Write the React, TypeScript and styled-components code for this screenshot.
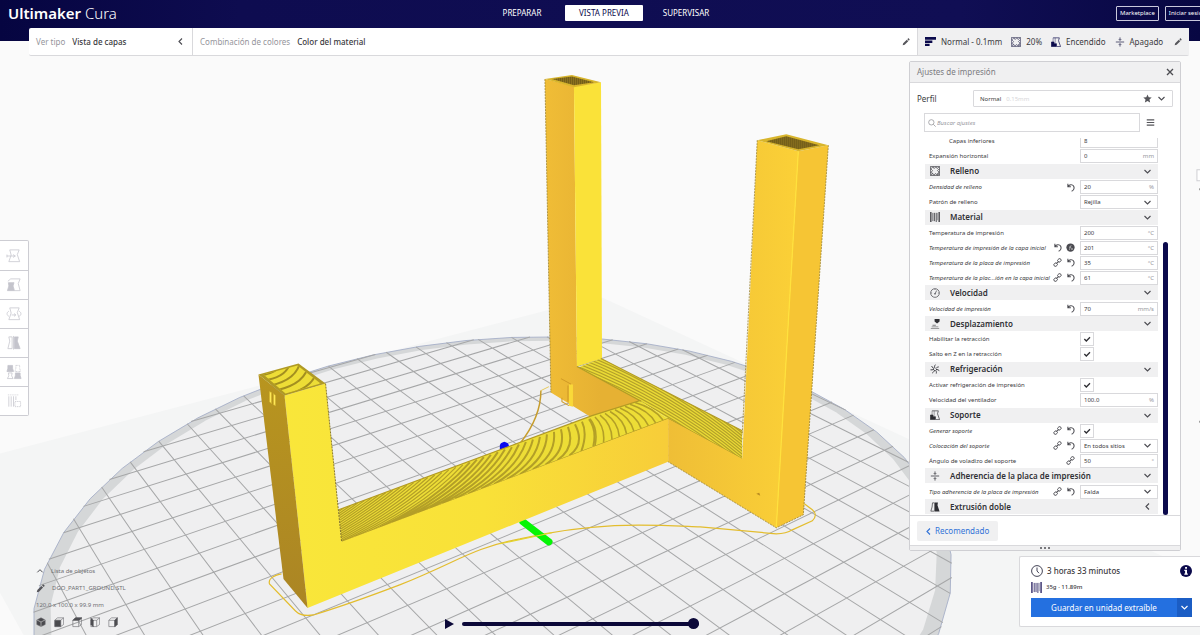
import React, { useState } from "react";
import styled, { createGlobalStyle } from "styled-components";

const navy = "#0b0a4c";
const line = "#d9d9dc";
const ink = "#3a3a40";

const GlobalStyle = createGlobalStyle`
  *, *::before, *::after { box-sizing: border-box; }
  body { margin: 0; font-family: "Noto Sans", "Open Sans", sans-serif; color: ${ink}; background: #fafafa; }
  button, input, select { font: inherit; color: inherit; margin: 0; padding: 0; border: 0; border-radius: 0; background: none; outline: 0; }
  button { cursor: pointer; }
  svg { display: block; flex: none; }
`;

/* ---------- layout ---------- */

const Page = styled.div`
  position: relative;
  display: flex;
  flex-direction: column;
  min-height: 100vh;
  overflow: hidden;
  font-size: 8px;
  line-height: 12px;
`;

const SceneLayer = styled.svg`
  position: absolute;
  inset: 0;
  width: 100%;
  height: 100%;
`;

const Header = styled.header`
  position: relative;
  display: grid;
  grid-template-columns: 1fr auto 1fr;
  align-items: start;
  height: 41px;
  padding-left: 8px;
  background: linear-gradient(90deg, #060541 0, #0e0c50 20%, #100e54 80%, #080743 100%);
  color: #fff;
`;

const Brand = styled.h1`
  margin: 0;
  font-size: 15px;
  line-height: 26px;
  font-weight: 600;
  span { font-weight: 300; }
`;

const Stages = styled.nav`
  display: flex;
  gap: 4px;
  padding-top: 5px;
`;

const StageTab = styled.button<{ $active?: boolean }>`
  width: 78px;
  height: 16px;
  font-size: 8px;
  border-radius: 1px;
  background: ${(p) => (p.$active ? "#fff" : "transparent")};
  color: ${(p) => (p.$active ? navy : "#fff")};
`;

const Account = styled.div`
  display: flex;
  justify-content: flex-end;
  gap: 6px;
  padding-top: 6px;
  margin-right: -10px;
`;

const OutlineButton = styled.button`
  height: 15px;
  padding: 0 3px;
  border: 1px solid #c9c8dc;
  border-radius: 1px;
  font-size: 6px;
  line-height: 13px;
`;

const StageBar = styled.div`
  position: relative;
  display: flex;
  height: 28px;
  margin: -13px 11px 0 29px;
  background: #fff;
  border-bottom: 1px solid ${line};
  border-radius: 2px;
`;

const BarCell = styled.button<{ $grow?: boolean; $width?: number; $shade?: boolean }>`
  display: flex;
  align-items: center;
  gap: ${(p) => (p.$shade ? 9 : 7)}px;
  flex: ${(p) => (p.$grow ? "1" : `0 0 ${p.$width}px`)};
  padding: 0 7px;
  text-align: left;
  background: ${(p) => (p.$shade ? "#f0f0f1" : "transparent")};
  & + & { border-left: 1px solid ${line}; }
  & > svg:last-child { margin-left: auto; }
`;

const Muted = styled.span`
  color: #95959b;
`;

const Strong = styled.span`
  font-weight: 500;
`;

const Summary = styled.span`
  display: flex;
  align-items: center;
  gap: 5px;
`;

const Body = styled.main`
  position: relative;
  display: flex;
  flex: 1;
`;

const LeftColumn = styled.div`
  display: flex;
  flex-direction: column;
  justify-content: space-between;
  width: 235px;
  padding: 184px 0 8px;
`;

const Toolbar = styled.div`
  display: flex;
  flex-direction: column;
  width: 29px;
  border: 1px solid #cdcdd3;
  border-left: 0;
  border-radius: 0 2px 2px 0;
  background: #fff;
`;

const ToolButton = styled.button`
  display: grid;
  place-items: center;
  height: 29px;
  & + & { border-top: 1px solid #cdcdd3; }
`;

const ObjectInfo = styled.section`
  display: flex;
  flex-direction: column;
  gap: 5px;
  padding-left: 36px;
  color: #707074;
  font-size: 6px;
`;

const InfoLine = styled.div`
  display: flex;
  align-items: center;
  gap: 7px;
`;

const PlainButton = styled.button`
  display: flex;
  align-items: center;
  gap: 7px;
`;

const Views = styled.div`
  display: flex;
  gap: 8px;
`;

const Player = styled.div`
  display: flex;
  flex: 1;
  align-self: flex-end;
  align-items: center;
  justify-content: center;
  gap: 8px;
  padding-bottom: 6px;
`;

const Range = styled.input`
  appearance: none;
  width: 237px;
  height: 12px;
  &::-webkit-slider-runnable-track { height: 4px; border-radius: 2px; background: #0b0838; }
  &::-webkit-slider-thumb {
    appearance: none;
    width: 11px;
    height: 11px;
    margin-top: -4px;
    border-radius: 50%;
    background: #0b0838;
  }
`;

const RightColumn = styled.div`
  display: flex;
  flex-direction: column;
  align-items: flex-end;
  justify-content: space-between;
  gap: 5px;
  width: 291px;
  padding: 5px 0 9px;
`;

/* ---------- print settings ---------- */

const Panel = styled.section`
  display: flex;
  flex-direction: column;
  width: 272px;
  margin-right: 19px;
  border: 1px solid #cfcfd3;
  border-radius: 2px;
  background: #fff;
`;

const PanelHead = styled.header`
  display: flex;
  align-items: center;
  justify-content: space-between;
  height: 21px;
  padding: 0 6px 0 7px;
  border-bottom: 1px solid ${line};
  background: #f0f0f1;
  color: #7b7b80;
`;

const PanelTitle = styled.h2`
  margin: 0;
  font-size: 8px;
  font-weight: 400;
`;

const IconButton = styled.button`
  display: grid;
  place-items: center;
`;

const ProfileRow = styled.div`
  display: flex;
  align-items: center;
  justify-content: space-between;
  padding: 7px 7px 6px;
`;

const ProfileBox = styled.button`
  display: flex;
  align-items: center;
  gap: 5px;
  width: 200px;
  height: 17px;
  padding: 0 6px;
  border: 1px solid ${line};
  border-radius: 1px;
  font-size: 6px;
  em { font-style: normal; color: #d6d6d9; flex: 1; text-align: left; }
`;

const SearchRow = styled.div`
  display: flex;
  align-items: center;
  gap: 6px;
  padding: 0 14px 6px;
`;

const SearchBox = styled.label`
  display: flex;
  align-items: center;
  gap: 1px;
  width: 216px;
  height: 19px;
  padding: 0 3px;
  border: 1px solid ${line};
  input { flex: 1; min-width: 0; font-size: 6px; font-style: italic; }
  input::placeholder { color: #9a9a9f; opacity: 1; }
`;

const Scroller = styled.div`
  display: flex;
  align-items: flex-end;
  gap: 5px;
  height: 377px;
  padding-left: 15px;
  overflow: hidden;
`;

const ScrollThumb = styled.div`
  width: 5px;
  height: 273px;
  border-radius: 3px;
  background: ${navy};
`;

const SettingList = styled.div`
  display: flex;
  flex-direction: column;
  width: 233px;
  height: 381px;
`;

const Row = styled.div`
  display: flex;
  flex: 1;
  align-items: center;
  gap: 5px;
  padding-left: 4px;
`;

const RowLabel = styled.label<{ $changed?: boolean; $indent?: boolean }>`
  flex: 1;
  min-width: 0;
  padding-left: ${(p) => (p.$indent ? 20 : 0)}px;
  font-size: 6px;
  line-height: 8px;
  white-space: nowrap;
  font-style: ${(p) => (p.$changed ? "italic" : "normal")};
`;

const RowIcons = styled.span`
  display: flex;
  gap: 4px;
`;

const SectionHead = styled.button`
  display: flex;
  flex: 1;
  align-items: center;
  gap: 10px;
  padding: 0 6px 0 5px;
  border-bottom: 1px solid #fff;
  background: #f0f0f1;
  font-size: 8px;
  font-weight: 600;
  line-height: 12px;
  color: #303035;
  svg:last-child { margin-left: auto; }
`;

const Control = styled.span<{ $small?: boolean }>`
  display: flex;
  align-items: center;
  flex: none;
  width: ${(p) => (p.$small ? 14 : 78)}px;
  height: 14px;
  margin-right: ${(p) => (p.$small ? 64 : 0)}px;
  border: 1px solid ${line};
  background: #fff;
  font-size: 6px;
  input[type="text"] { flex: 1; min-width: 0; height: 12px; padding-left: 3px; }
`;

const Unit = styled.span`
  padding-right: 3px;
  color: #96969c;
`;

const Stack = styled.span`
  display: grid;
  flex: 1;
  align-items: center;
  & > * { grid-area: 1 / 1; }
  svg { justify-self: end; margin-right: 5px; pointer-events: none; }
`;

const Select = styled.select`
  appearance: none;
  width: 100%;
  height: 12px;
  padding-left: 3px;
`;

const CheckStack = styled(Stack)`
  svg { justify-self: center; margin: 0; }
`;

const Tick = styled.input`
  appearance: none;
  width: 12px;
  height: 12px;
  & + svg { visibility: hidden; }
  &:checked + svg { visibility: visible; }
`;

const PanelFoot = styled.footer`
  padding: 5px 7px 4px;
  border-top: 1px solid ${line};
`;

const Recommended = styled.button`
  display: flex;
  align-items: center;
  gap: 2px;
  width: 81px;
  height: 20px;
  padding: 0 7px;
  border-radius: 2px;
  background: #f0f0f1;
  color: #3273d8;
`;

const Grip = styled.div`
  display: flex;
  align-items: center;
  justify-content: center;
  gap: 2px;
  height: 5px;
  border-top: 1px solid ${line};
  background: #f0f0f1;
  i { width: 2px; height: 2px; border-radius: 50%; background: #505055; }
`;

/* ---------- output card ---------- */

const OutputCard = styled.section`
  display: flex;
  flex-direction: column;
  width: 181px;
  height: 71px;
  padding: 7px 8px 9px 11px;
  border: 1px solid ${line};
  border-right: 0;
  border-radius: 2px 0 0 2px;
  background: #fff;
`;

const OutputLine = styled.div<{ $minor?: boolean }>`
  display: flex;
  align-items: center;
  gap: 4px;
  height: 14px;
  margin-bottom: ${(p) => (p.$minor ? 4 : 2)}px;
  font-size: ${(p) => (p.$minor ? 6 : 8)}px;
  font-weight: 500;
  button { margin-left: auto; }
`;

const SaveRow = styled.div`
  display: flex;
  height: 19px;
  background: #2470e0;
  color: #fff;
`;

const SaveButton = styled.button`
  flex: 1;
`;

const SaveMore = styled.button`
  display: grid;
  place-items: center;
  width: 15px;
  background: #1b5dc4;
`;

/* ---------- icons ---------- */

type IconProps = { size?: number; color?: string };
type Dir = "down" | "left" | "up";

const chevrons: Record<Dir, string> = {
  down: "M2 4l4 4 4-4",
  left: "M8 2L4 6l4 4",
  up: "M2 8l4-4 4 4",
};

const Chevron = ({ dir = "down", size = 9, color = "#4c4c52" }: IconProps & { dir?: Dir }) => (
  <svg width={size} height={size} viewBox="0 0 12 12" fill="none" stroke={color} strokeWidth="1.500">
    <path d={chevrons[dir]} />
  </svg>
);

const Pencil = ({ size = 8, color = "#55555a" }: IconProps) => (
  <svg width={size} height={size} viewBox="0 0 12 12" fill={color}>
    <path d="M1 11l.8-3L7.2 2.600l2.200 2.200L4 10.200zM8 1.800l1-1c.4-.4 1-.3 1.300 0l.9.900c.4.400.4.900 0 1.300l-1 1z" />
  </svg>
);

const LayersIcon = () => (
  <svg width="11" height="11" viewBox="0 0 12 12" fill={navy}>
    <path d="M0 1h12v3H0zM0 5h8v2.500H0zM0 8.500h5V11H0z" />
  </svg>
);

const InfillIcon = ({ size = 10, color = "#4a4a6a" }: IconProps) => (
  <svg width={size} height={size} viewBox="0 0 12 12" fill="none" stroke={color} strokeWidth=".9">
    <path d="M.5.500h11v11H.5z" />
    <path d="M1 3.500L3.500 1 5 3 7 1l1.500 2L11 1M1 3.500l2 2-2 2.500 2.500 1L1 11M3.500 9L5 11l1.500-2L9 11l.5-2.500L11 11M11 3.500l-2 2 2 2-1.500 1" />
  </svg>
);

const SupportIcon = ({ size = 10, color = navy }: IconProps) => (
  <svg width={size} height={size} viewBox="0 0 12 12" fill="none" stroke={color} strokeWidth=".8">
    <path d="M2.500 1H10L9 4.500l2.500 7H7" />
    <path d="M.5 6h3l.5 2h2.500v3.500h-6z" fill={color} />
    <path d="M2.500 1v5M5 1v6" strokeWidth=".5" />
  </svg>
);

const AdhesionIcon = ({ size = 10, color = "#3f3f60" }: IconProps) => (
  <svg width={size} height={size} viewBox="0 0 12 12" fill="none" stroke={color}>
    <path d="M1 6h10M6 .5V4M6 8v3.500M4.500 2.500L6 4l1.500-1.500M4.500 9.500L6 8l1.500 1.500" />
  </svg>
);

const MaterialIcon = ({ size = 10, color = "#3c3c42" }: IconProps) => (
  <svg width={size} height={size} viewBox="0 0 12 12" fill="none" stroke={color}>
    <path d="M1 0v12M11 0v12" strokeWidth="1.600" />
    <path d="M3.500 1v10M5.500 1v10M7.500 1v11" />
    <path d="M9 1v9" strokeWidth=".5" />
  </svg>
);

const SpeedIcon = () => (
  <svg width="10" height="10" viewBox="0 0 12 12" fill="none" stroke="#4c4c52" strokeWidth=".9">
    <circle cx="6" cy="6" r="5.200" />
    <path d="M6 7l2-4M6 1.200v1M1.500 6h1M9.500 6h1" />
    <circle cx="6" cy="7" r=".6" />
  </svg>
);

const TravelIcon = () => (
  <svg width="10" height="10" viewBox="0 0 12 12" fill="#2f2f34">
    <path d="M5.500 0h6v3L8.500 5.500 5.500 3z" />
    <path d="M1 11h10v1H1zM2 9h8v1H2zM3 7h4v1H3z" opacity=".6" />
  </svg>
);

const CoolingIcon = () => (
  <svg width="10" height="10" viewBox="0 0 12 12" fill="none" stroke="#3f3f45" strokeWidth="1.200">
    <path d="M6 5C5 3.500 5.500 2 6.500.8M7 5.500C8 4 9.500 3.500 10.500 3.500M7.200 6.500c1.800 0 3 .5 4 1.500M6.500 7.200c1 1.300 1.500 2.500 1 4.200M5.500 7.200C5 9 4 10 2.800 10.800M4.800 6.300C3 7 2 7.300.6 7M5 5.500C3.500 5 2.500 4 2 2.500" />
  </svg>
);

const DualIcon = () => (
  <svg width="10" height="10" viewBox="0 0 12 12" fill="#2f2f34">
    <path d="M3 1h2.500v10H1L2.500 6z" fill="none" stroke="#2f2f34" strokeWidth=".8" />
    <path d="M6 .5h3.500L9 4l2.500 7.500H6z" />
  </svg>
);

const ResetIcon = () => (
  <svg width="9" height="9" viewBox="0 0 12 12" fill="none" stroke="#4a4a50" strokeWidth="1.400">
    <path d="M2.500 1v4h4M2.500 5C4 2.500 6 1.800 8 2.500c2.500 1 3.500 3.500 2.300 6-.6 1.200-1.500 2-2.800 2.500" />
  </svg>
);

const LinkIcon = () => (
  <svg width="9" height="9" viewBox="0 0 12 12" fill="none" stroke="#4a4a50" strokeWidth="1.200">
    <rect x="6" y="1.200" width="5" height="4" rx="2" transform="rotate(-40 8.500 3.200)" />
    <rect x="1" y="6.800" width="5" height="4" rx="2" transform="rotate(-40 3.500 8.800)" />
    <path d="M4.500 7.500l3-3" />
  </svg>
);

const FormulaIcon = () => (
  <svg width="9" height="9" viewBox="0 0 12 12">
    <circle cx="6" cy="6" r="5.500" fill="#4a4a50" />
    <path d="M4 9.500c1.500 0 1-6 3-6.500M4 5.500h3M7 7l2 2M9 7L7 9" stroke="#ddd" strokeWidth=".8" fill="none" />
  </svg>
);

const CheckIcon = () => (
  <svg width="8" height="8" viewBox="0 0 12 12" fill="none" stroke="#2f2f34" strokeWidth="2">
    <path d="M2 6l3 3 5.500-5.500" />
  </svg>
);

const CloseIcon = () => (
  <svg width="8" height="8" viewBox="0 0 12 12" stroke="#4c4c52" strokeWidth="2">
    <path d="M1.500 1.500l9 9M10.500 1.500l-9 9" />
  </svg>
);

const StarIcon = () => (
  <svg width="9" height="9" viewBox="0 0 12 12" fill="#55555a">
    <path d="M6 .5l1.600 3.700 4 .3-3 2.700.9 4L6 9.200l-3.500 2 .9-4-3-2.700 4-.3z" />
  </svg>
);

const SearchIcon = () => (
  <svg width="8" height="8" viewBox="0 0 12 12" fill="none" stroke="#85858a">
    <circle cx="5" cy="5" r="4" />
    <path d="M8 8l3.500 3.500" />
  </svg>
);

const MenuIcon = () => (
  <svg width="9" height="9" viewBox="0 0 12 12" stroke="#55555a" strokeWidth="1.500">
    <path d="M1 2.500h10M1 6h10M1 9.500h10" />
  </svg>
);

const ClockIcon = () => (
  <svg width="12" height="12" viewBox="0 0 12 12" fill="none" stroke="#303045" strokeWidth=".9">
    <circle cx="6" cy="6" r="5.400" />
    <path d="M6 2.500V6l2 2.200" />
  </svg>
);

const InfoIcon = () => (
  <svg width="12" height="12" viewBox="0 0 12 12">
    <circle cx="6" cy="6" r="6" fill={navy} />
    <path d="M5.100 2h1.900v1.700H5.100zM4.300 4.700h2.700v3.800h.8v1.200H4.300V8.500h.8V5.900h-.8z" fill="#fff" />
  </svg>
);

const PlayIcon = () => (
  <svg width="9" height="10" viewBox="0 0 9 10" fill="#0b0838">
    <path d="M0 0l9 5-9 5z" />
  </svg>
);

const body = "M4 1.500h10l-2 5 2.500 7.500H3L5.500 7z";
const toolShapes: Record<string, React.ReactNode> = {
  Mover: (
    <>
      <path d={body} />
      <path d="M1 8h8M7.500 6.500L10 8l-2.500 1.500M1 6.500v3" />
    </>
  ),
  Escalar: (
    <>
      <path d="M5 1.500h10l-2 5 2 7.500H9M5 1.500L2 4" />
      <path d="M2.500 5.500h6L7.500 9 9 14H1.500L3 9z" fill="#c4c4cc" />
    </>
  ),
  Rotar: (
    <>
      <path d={body} />
      <path d="M3 5C.5 6.500.5 9 3 10.500M14 5c2.500 1.500 2.500 4 0 5.500M6 9h4M8.500 7.500L10.500 9l-2 1.500" />
    </>
  ),
  Reflejar: (
    <>
      <path d="M6.500 1.500H3l1 4.500-2 8h4.500z" />
      <path d="M8 .5v14.500" />
      <path d="M9 1.500h4L12 6l3 8H9z" fill="#c4c4cc" />
    </>
  ),
  "Ajustes por modelo": (
    <>
      <path d="M2 1h5v3l1 3.500H1L2 4z" fill="#c4c4cc" />
      <path d="M10.500 1h4v3l1 3.500H9.500l1-3.500z" strokeDasharray="1 .6" />
      <path d="M2.500 9h4l-.5 3 1.500 3H1.500L3 12z" />
      <path d="M10 9h5v2.500l1 3.500H9l1-3.500z" fill="#c4c4cc" />
    </>
  ),
  "Bloqueador de soporte": (
    <>
      <path d="M2 1.500h12" strokeDasharray="1 1" />
      <path d="M3 3v11M5.500 3v11M8 3v11M10.500 3v4" />
      <path d="M9.500 8.500h6V14h-6z" fill="#fff" strokeDasharray="1.500 .8" />
    </>
  ),
};

const cubes = [
  "M6 1l5 2.500v5.500L6 11.500 1 9V3.500z",
  "M1 4h7v7.500H1z",
  "M1 4l3-3h8L9 4z",
  "M1 1l3 3v8L1 9z",
  "M8 4l3-3v8l-3 3z",
];

/* ---------- build plate and model ---------- */

/* Ground plane: u runs towards the right vanishing point, v towards the left one. */
const center = { u: 5.82, v: 0.68 };
const project = (u: number, v: number): [number, number] => {
  const t = (u + center.u) * 0.0222;
  const s = (v + center.v) * 0.028;
  const w = 1 + t + s;
  return [(308 + 2200 * t - 340 * s) / w, (607 - 160 * (t + s)) / w];
};
const pt = (u: number, v: number) => project(u, v).map((n) => n.toFixed(1)).join(" ");

const radius = 11.12;
const disc = (r: number, n: number) =>
  Array.from({ length: n }, (_, i) => {
    const a = (i / n) * Math.PI * 2;
    return pt(r * Math.cos(a), r * Math.sin(a));
  }).join(" ");

const gridPath = Array.from({ length: 23 }, (_, i) => i - 11)
  .map((k) => {
    const h = Math.sqrt(radius * radius - k * k);
    return `M${pt(k, -h)}L${pt(k, h)}M${pt(-h, k)}L${pt(h, k)}`;
  })
  .join("");

const farY = (x: number) => 509 - 0.362 * (x - 339);
const nearY = (x: number) => 541 - 0.379 * (x - 342);

/* How far each top-skin line drifts left between the far and near edge of the beam. */
const drift: [number, number][] = [
  [340, 190],
  [450, 105],
  [510, 58],
  [560, 16],
  [600, -12],
  [640, -30],
  [720, -44],
];
const driftAt = (x: number) => {
  const i = Math.max(1, drift.findIndex(([px]) => px >= x));
  const [x0, d0] = drift[i - 1];
  const [x1, d1] = drift[i];
  return d0 + ((d1 - d0) * (x - x0)) / (x1 - x0);
};

const grain = (from: number, to: number, step: number) => {
  let out = "";
  for (let x = from; x < to; x += step) {
    const d = driftAt(x);
    const nx = x - d;
    const cx = (x + nx) / 2 + (x < 580 ? 13 : 6);
    const cy = (farY(x) + nearY(nx)) / 2 + (x < 580 ? 4 : -3);
    out += `M${x} ${farY(x).toFixed(1)}Q${cx.toFixed(1)} ${cy.toFixed(1)} ${nx.toFixed(1)} ${nearY(nx).toFixed(1)}`;
  }
  return out;
};
const fineGrain = grain(344, 470, 7);
const wideGrain = grain(470, 590, 7);
const endGrain = grain(590, 716, 5);

const crossGrain = Array.from({ length: 50 }, (_, i) => {
  const y = 255 + i * 3;
  return `M570 ${y}Q670 ${y + 38} 750 ${y + 106}`;
}).join("");

const Scene = () => (
  <SceneLayer viewBox="0 0 1200 635" preserveAspectRatio="xMidYMid slice" aria-hidden="true">
    <defs>
      <linearGradient id="leftFace" x1="0" y1="0" x2="0" y2="1">
        <stop offset="0" stopColor="#b8951f" />
        <stop offset="1" stopColor="#ab8524" />
      </linearGradient>
      <linearGradient id="frontFace" x1="260" x2="668" y1="0" y2="0" gradientUnits="userSpaceOnUse">
        <stop offset="0" stopColor="#f9e73a" />
        <stop offset=".55" stopColor="#f9e138" />
        <stop offset="1" stopColor="#f7cd39" />
      </linearGradient>
      <linearGradient id="backLeft" x1="545" x2="600" y1="0" y2="0" gradientUnits="userSpaceOnUse">
        <stop offset="0" stopColor="#f0bd36" />
        <stop offset="1" stopColor="#e6b133" />
      </linearGradient>
      <linearGradient id="rightFront" x1="668" x2="810" y1="0" y2="0" gradientUnits="userSpaceOnUse">
        <stop offset="0" stopColor="#efbe36" />
        <stop offset="1" stopColor="#fcd237" />
      </linearGradient>
      <pattern id="hatch" width="2" height="2" patternUnits="userSpaceOnUse">
        <rect width="2" height="2" fill="#8e7420" />
        <rect width="1" height="2" fill="#6e5a18" />
      </pattern>
      <clipPath id="beamTop"><path d="M339 509L592 415 640 400 668 418 342 541z" /></clipPath>
      <clipPath id="crossTop"><path d="M578 367L601 358 742 430V458L668 418 640 400z" /></clipPath>
      <clipPath id="legTop"><path d="M264 374L298 365 321 383 286 393z" /></clipPath>
    </defs>

    <rect width="1200" height="635" fill="#fafafa" />
    <path d="M0 453L600 296 1200 573V635H25L0 590z" fill="#f4f5f5" />
    <polygon points={disc(radius, 44)} fill="#d5d7d8" stroke="#9fa9c4" strokeWidth=".8" />
    <polygon points={disc(10.78, 44)} fill="#efeff0" />
    <path d={gridPath} stroke="#a6a7a8" strokeWidth="1" fill="none" />

    <path d="M541 390C541 410 532 428 520 443" stroke="#c79d2c" strokeWidth="1.500" fill="none" />
    <path d="M541 390l8-4" stroke="#e6c95a" fill="none" />
    <path d="M500 450v-5q0-3 4.500-4 4.500 1 4.500 4v5z" fill="#0a0af0" />

    <path
      d="M282 573Q268 576 270 583L296 610Q302 616 314 614 350 603 400 584C460 560 470 548 520 538 600 520 650 524 700 526L776 533Q786 533 792 529L812 520Q818 514 812 509L804 503"
      stroke="#e3bd2e"
      strokeWidth="1.200"
      fill="none"
    />
    <path d="M523 521L549 541" stroke="#05f505" strokeWidth="7" strokeLinecap="round" />
    <path d="M500 543L552 532" stroke="#e3d42e" />

    <path d="M545 79L574 86 577 366 640 400 592 417 551 392z" fill="url(#backLeft)" />
    <path d="M574 86L601 82 602 358 577 366z" fill="#fae239" />
    <path d="M545 79L572 75 601 82 574 87z" fill="#d8b52c" />
    <path d="M552 79L572 76.500 594 82 574 85z" fill="url(#hatch)" />
    <path d="M569 384h4v22l-4-1z" fill="#f9d939" />
    <path d="M561 378l10 5.500M568 385v16M562 397v4l7 4" stroke="#cf9a26" strokeWidth="1" fill="none" />

    <path d="M578 367L601 358 742 430V458L668 418 640 400z" fill="#eada35" />
    <path d={crossGrain} clipPath="url(#crossTop)" stroke="#b3a02a" strokeWidth="1.200" fill="none" />
    <path d="M339 509L592 415 640 400 668 418 342 541z" fill="#eddd36" />
    <g clipPath="url(#beamTop)" stroke="#b39f27" fill="none">
      <path d={fineGrain} strokeWidth="1.200" />
      <path d={wideGrain} strokeWidth="2" />
      <path d={endGrain} strokeWidth="1.600" />
    </g>
    <path d="M339 509L592 415 640 400 577 366M601 358L742 430M342 541L668 418 742 458" stroke="#b39b24" strokeWidth="1.200" fill="none" />

    <path d="M757 140L798 151 776 527 668 461V418L742 458z" fill="url(#rightFront)" />
    <path d="M798 151L828 145 803 514 776 527z" fill="#f6c534" />
    <path d="M798 151L776 527" stroke="#ffe23c" strokeWidth="1.200" />
    <path d="M757 140L786 134 828 145 798 151z" fill="#d8b52c" />
    <path d="M766 141L786 136 819 145 798 149z" fill="url(#hatch)" />
    <path d="M757 140L742 434M828 145L803 514L776 527L668 461M545 79L551 392" stroke="#9c8330" strokeWidth=".8" strokeDasharray="2 1" fill="none" />
    <path d="M756 493l3-1 1 3z" fill="#b98b20" />

    <path d="M285 395L326 383 342 541 668 418V461L308 607z" fill="url(#frontFace)" />
    <path d="M259 374L285 395 308 607 284 578z" fill="url(#leftFace)" />
    <path d="M259 374L299 363 326 383 285 395z" fill="#b09a24" />
    <path d="M264 374L298 365 321 383 286 393z" fill="#eddd36" />
    <path
      d="M255 376Q276 374 282 364M262 380Q286 378 291 362M264 386Q294 382 300 364M270 391Q302 386 308 368M279 396Q310 390 316 374M290 398Q318 392 324 379"
      clipPath="url(#legTop)"
      stroke="#a38f20"
      strokeWidth="2"
      fill="none"
    />
    <path d="M270 391l2 1v11l-2-2zM274 393l2 2v10l-2-1z" fill="#ffe85a" stroke="#cfae28" strokeWidth=".6" />
    <path d="M326 383L342 541" stroke="#7d6b20" strokeWidth=".9" strokeDasharray="2 1" />

    <path d="M1201 169.500h-5v11h5" fill="#fff" stroke="#cfcfd3" />
    <circle cx="1200" cy="189" r="1.500" fill="#444" />
    <circle cx="1200" cy="421" r="1.500" fill="#444" />
  </SceneLayer>
);

/* ---------- settings data ---------- */

type Mark = "link" | "reset" | "formula";
type Item =
  | { kind: "section"; title: string; icon: React.ReactNode; closed?: boolean }
  | { kind: "text"; label: string; value: string; unit?: string; marks?: Mark[]; changed?: boolean; indent?: boolean }
  | { kind: "select"; label: string; value: string; marks?: Mark[]; changed?: boolean }
  | { kind: "check"; label: string; marks?: Mark[]; changed?: boolean };

const grey = "#44444a";
const items: Item[] = [
  { kind: "text", label: "Capas inferiores", value: "8", indent: true },
  { kind: "text", label: "Expansión horizontal", value: "0", unit: "mm" },
  { kind: "section", title: "Relleno", icon: <InfillIcon color={grey} /> },
  { kind: "text", label: "Densidad de relleno", value: "20", unit: "%", marks: ["reset"], changed: true },
  { kind: "select", label: "Patrón de relleno", value: "Rejilla" },
  { kind: "section", title: "Material", icon: <MaterialIcon /> },
  { kind: "text", label: "Temperatura de impresión", value: "200", unit: "°C" },
  { kind: "text", label: "Temperatura de impresión de la capa inicial", value: "201", unit: "°C", marks: ["reset", "formula"], changed: true },
  { kind: "text", label: "Temperatura de la placa de impresión", value: "35", unit: "°C", marks: ["link", "reset"], changed: true },
  { kind: "text", label: "Temperatura de la plac...ión en la capa inicial", value: "61", unit: "°C", marks: ["link", "reset"], changed: true },
  { kind: "section", title: "Velocidad", icon: <SpeedIcon /> },
  { kind: "text", label: "Velocidad de impresión", value: "70", unit: "mm/s", marks: ["reset"], changed: true },
  { kind: "section", title: "Desplazamiento", icon: <TravelIcon /> },
  { kind: "check", label: "Habilitar la retracción" },
  { kind: "check", label: "Salto en Z en la retracción" },
  { kind: "section", title: "Refrigeración", icon: <CoolingIcon /> },
  { kind: "check", label: "Activar refrigeración de impresión" },
  { kind: "text", label: "Velocidad del ventilador", value: "100.0", unit: "%" },
  { kind: "section", title: "Soporte", icon: <SupportIcon color="#2f2f34" /> },
  { kind: "check", label: "Generar soporte", marks: ["link", "reset"], changed: true },
  { kind: "select", label: "Colocación del soporte", value: "En todos sitios", marks: ["link", "reset"], changed: true },
  { kind: "text", label: "Ángulo de voladizo del soporte", value: "50", unit: "°", marks: ["link"] },
  { kind: "section", title: "Adherencia de la placa de impresión", icon: <AdhesionIcon color={grey} /> },
  { kind: "select", label: "Tipo adherencia de la placa de impresión", value: "Falda", marks: ["link", "reset"], changed: true },
  { kind: "section", title: "Extrusión doble", icon: <DualIcon />, closed: true },
];

const markIcons: Record<Mark, React.ReactNode> = {
  link: <LinkIcon />,
  reset: <ResetIcon />,
  formula: <FormulaIcon />,
};

const SettingRow = ({ item, id }: { item: Item; id: string }) => {
  if (item.kind === "section") {
    return (
      <SectionHead type="button">
        {item.icon}
        {item.title}
        <Chevron dir={item.closed ? "left" : "down"} />
      </SectionHead>
    );
  }
  return (
    <Row>
      <RowLabel htmlFor={id} $changed={item.changed} $indent={item.kind === "text" && item.indent}>
        {item.label}
      </RowLabel>
      {item.marks && (
        <RowIcons>
          {item.marks.map((m) => (
            <IconButton key={m} type="button" aria-label={m}>
              {markIcons[m]}
            </IconButton>
          ))}
        </RowIcons>
      )}
      {item.kind === "text" && (
        <Control>
          <input id={id} type="text" defaultValue={item.value} />
          <Unit>{item.unit}</Unit>
        </Control>
      )}
      {item.kind === "select" && (
        <Control>
          <Stack>
            <Select id={id} defaultValue={item.value}>
              <option>{item.value}</option>
            </Select>
            <Chevron />
          </Stack>
        </Control>
      )}
      {item.kind === "check" && (
        <Control $small>
          <CheckStack>
            <Tick id={id} type="checkbox" defaultChecked />
            <CheckIcon />
          </CheckStack>
        </Control>
      )}
    </Row>
  );
};

export default function App() {
  const [layer, setLayer] = useState(100);
  return (
    <>
      <GlobalStyle />
      <Page>
        <Scene />
        <Header>
          <Brand>
            Ultimaker <span>Cura</span>
          </Brand>
          <Stages>
            <StageTab>PREPARAR</StageTab>
            <StageTab $active>VISTA PREVIA</StageTab>
            <StageTab>SUPERVISAR</StageTab>
          </Stages>
          <Account>
            <OutlineButton>Marketplace</OutlineButton>
            <OutlineButton>Iniciar sesión</OutlineButton>
          </Account>
        </Header>

        <StageBar>
          <BarCell $width={163}>
            <Muted>Ver tipo</Muted>
            <Strong>Vista de capas</Strong>
            <Chevron dir="left" />
          </BarCell>
          <BarCell $grow>
            <Muted>Combinación de colores</Muted>
            <Strong>Color del material</Strong>
            <Pencil />
          </BarCell>
          <BarCell $width={272} $shade>
            <Summary><LayersIcon />Normal - 0.1mm</Summary>
            <Summary><InfillIcon />20%</Summary>
            <Summary><SupportIcon />Encendido</Summary>
            <Summary><AdhesionIcon />Apagado</Summary>
            <Pencil />
          </BarCell>
        </StageBar>

        <Body>
          <LeftColumn>
            <Toolbar>
              {Object.entries(toolShapes).map(([name, shape]) => (
                <ToolButton key={name} type="button" aria-label={name}>
                  <svg width="16" height="16" viewBox="0 0 17 16" fill="none" stroke="#c4c4cc" strokeWidth=".8">
                    {shape}
                  </svg>
                </ToolButton>
              ))}
            </Toolbar>
            <ObjectInfo>
              <PlainButton type="button">
                <Chevron dir="up" size={8} />
                Lista de objetos
              </PlainButton>
              <InfoLine>
                <Pencil size={9} />
                DGO_PART1_GROUND.STL
              </InfoLine>
              <InfoLine>120.0 x 100.0 x 99.9 mm</InfoLine>
              <Views>
                {cubes.map((d, i) => (
                  <IconButton key={d} type="button" aria-label={`Vista ${i + 1}`}>
                    <svg width="10" height="12" viewBox="0 0 12 12" fill="none" stroke="#66666a" strokeWidth=".7">
                      {i > 0 && <path d="M1 4h7v7.500H1zM1 4l3-3h7.500v8L8 11.500M8 4l3.500-3" />}
                      <path d={d} fill="#4a4a4e" />
                      {i === 0 && <path d="M1 3.500L6 6l5-2.500M6 6v5.500" stroke="#ddd" />}
                    </svg>
                  </IconButton>
                ))}
              </Views>
            </ObjectInfo>
          </LeftColumn>

          <Player>
            <IconButton type="button" aria-label="Reproducir">
              <PlayIcon />
            </IconButton>
            <Range
              type="range"
              aria-label="Trayectoria"
              value={layer}
              onChange={(e) => setLayer(Number(e.target.value))}
            />
          </Player>

          <RightColumn>
            <Panel>
              <PanelHead>
                <PanelTitle>Ajustes de impresión</PanelTitle>
                <IconButton type="button" aria-label="Cerrar">
                  <CloseIcon />
                </IconButton>
              </PanelHead>
              <ProfileRow>
                <span id="profile">Perfil</span>
                <ProfileBox type="button" aria-labelledby="profile">
                  Normal <em>0.15mm</em>
                  <StarIcon />
                  <Chevron />
                </ProfileBox>
              </ProfileRow>
              <SearchRow>
                <SearchBox>
                  <SearchIcon />
                  <input type="text" placeholder="Buscar ajustes" aria-label="Buscar ajustes" />
                </SearchBox>
                <IconButton type="button" aria-label="Visibilidad">
                  <MenuIcon />
                </IconButton>
              </SearchRow>
              <Scroller>
                <SettingList>
                  {items.map((item, i) => (
                    <SettingRow key={i} item={item} id={`setting-${i}`} />
                  ))}
                </SettingList>
                <ScrollThumb />
              </Scroller>
              <PanelFoot>
                <Recommended type="button">
                  <Chevron dir="left" color="#3273d8" />
                  Recomendado
                </Recommended>
              </PanelFoot>
              <Grip><i /><i /><i /></Grip>
            </Panel>

            <OutputCard>
              <OutputLine>
                <ClockIcon />
                3 horas 33 minutos
                <IconButton type="button" aria-label="Información">
                  <InfoIcon />
                </IconButton>
              </OutputLine>
              <OutputLine $minor>
                <MaterialIcon size={11} color="#3b3470" />
                35g · 11.89m
              </OutputLine>
              <SaveRow>
                <SaveButton type="button">Guardar en unidad extraíble</SaveButton>
                <SaveMore type="button" aria-label="Más opciones">
                  <Chevron color="#fff" />
                </SaveMore>
              </SaveRow>
            </OutputCard>
          </RightColumn>
        </Body>
      </Page>
    </>
  );
}
